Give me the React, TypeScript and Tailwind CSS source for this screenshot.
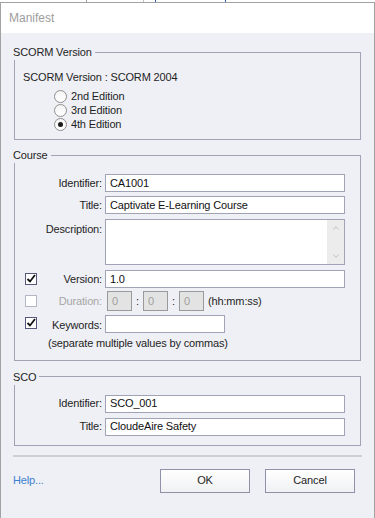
import { ChevronUp, ChevronDown } from 'lucide-react'

const font = { fontFamily: '"Liberation Sans", Arial, sans-serif' }

function Radio({ checked, label }: { checked?: boolean; label: string }) {
  return (
    <div className="flex items-center h-[14px]">
      <span className="w-[13px] h-[13px] rounded-full border border-[#8f8f8f] bg-gradient-to-b from-[#f4f4f4] to-white flex items-center justify-center">
        {checked && <span className="w-[5px] h-[5px] rounded-full bg-[#1a1a1a]" />}
      </span>
      <span className="ml-[4px] text-[#1e1e1e]">{label}</span>
    </div>
  )
}

function Check({ checked, disabled }: { checked?: boolean; disabled?: boolean }) {
  return (
    <span className={`w-[12px] h-[12px] border flex items-center justify-center bg-white ${disabled ? 'border-[#b4b6c4]' : 'border-[#55587a]'}`}>
      {checked && (
        <svg width="10" height="10" viewBox="0 0 10 10">
          <path d="M1.5 5 L4 7.5 L9 1" fill="none" stroke="#111" strokeWidth="1.8" />
        </svg>
      )}
    </span>
  )
}

function Field({ label, value, w = 'w-[240px]' }: { label: string; value?: string; w?: string }) {
  return (
    <div className="flex items-center">
      <span className="w-[87px] text-right text-[#1e1e1e]">{label}</span>
      <div className={`ml-[3px] ${w} h-[18px] border border-[#a0a3b6] bg-white flex items-center pl-[4px] text-[#111]`}>
        {value}
      </div>
    </div>
  )
}

function Group({ title, children, className }: { title: string; children: React.ReactNode; className?: string }) {
  return (
    <fieldset className={`border border-[#a0a3b6] mx-[13px] ${className ?? ''}`}>
      <legend className="-ml-[2px] pr-[3px] bg-[#eff0f5] leading-[16px] text-[#1e1e1e]">{title}</legend>
      {children}
    </fieldset>
  )
}

function TimeBox() {
  return (
    <div className="w-[25px] h-[20px] border border-[#9a9a9a] bg-[#e3e3e3] flex items-center pl-[4px] text-[#9e9e9e]">0</div>
  )
}

export default function App() {
  return (
    <div className="w-[375px] h-[518px] overflow-hidden bg-white text-[11px] tracking-[-0.15px]" style={font}>
      {/* bit of the app behind */}
      <div className="h-[2px] flex bg-white">
        <div className="w-[86px]" />
        <div className="w-px bg-[#9a9a9a]" />
        <div className="w-[56px]" />
        <div className="w-px bg-[#c0c0c0]" />
        <div className="w-[11px]" />
        <div className="w-px bg-[#2b5fb0]" />
        <div className="w-[69px]" />
        <div className="w-px bg-[#2b5fb0]" />
      </div>

      <div className="h-[516px] border-l border-t border-r border-[#a2a2a2] bg-[#eff0f5] flex flex-col">
        <div className="h-[30px] bg-white flex items-center pl-[8px] text-[12px] tracking-normal text-[#9d9d9d]">Manifest</div>

        <Group title="SCORM Version" className="mt-[11px] pb-[8px]">
          <div className="mt-[9px] pl-[8px] leading-[16px] text-[#1e1e1e]">SCORM Version : SCORM 2004</div>
          <div className="mt-[4px] pl-[39px] flex flex-col">
            <Radio label="2nd Edition" />
            <Radio label="3rd Edition" />
            <Radio checked label="4th Edition" />
          </div>
        </Group>

        <Group title="Course" className="mt-[7px] pb-[9px]">
          <div className="mt-[11px] flex flex-col">
            <Field label="Identifier:" value="CA1001" />
            <div className="mt-[4px]">
              <Field label="Title:" value="Captivate E-Learning Course" />
            </div>
            <div className="mt-[5px] flex items-start">
              <span className="w-[87px] text-right text-[#1e1e1e] mt-[2px]">Description:</span>
              <div className="ml-[3px] w-[240px] h-[46px] border border-[#a0a3b6] bg-white flex justify-end">
                <div className="w-[17px] h-full bg-[#ececec] flex flex-col items-center justify-between py-[3px] text-[#b5b5b5]">
                  <ChevronUp size={10} strokeWidth={2} />
                  <ChevronDown size={10} strokeWidth={2} />
                </div>
              </div>
            </div>

            <div className="mt-[5px] flex items-center">
              <span className="w-[87px] flex items-center">
                <span className="ml-[10px]"><Check checked /></span>
                <span className="ml-auto text-[#1e1e1e]">Version:</span>
              </span>
              <div className="ml-[3px] w-[240px] h-[18px] border border-[#a0a3b6] bg-white flex items-center pl-[4px] text-[#111]">1.0</div>
            </div>

            <div className="mt-[3px] flex items-center">
              <span className="w-[87px] flex items-center">
                <span className="ml-[10px]"><Check disabled /></span>
                <span className="ml-auto text-[#a6a6a6]">Duration:</span>
              </span>
              <div className="ml-[5px] flex items-center">
                <TimeBox />
                <span className="w-[11px] text-center text-[#1e1e1e]">:</span>
                <TimeBox />
                <span className="w-[11px] text-center text-[#1e1e1e]">:</span>
                <TimeBox />
                <span className="ml-[4px] text-[#1e1e1e]">(hh:mm:ss)</span>
              </div>
            </div>

            <div className="mt-[4px] flex items-start">
              <span className="w-[87px] flex items-start">
                <span className="ml-[10px] mt-[2px]"><Check checked /></span>
                <span className="ml-auto mt-[2px] text-[#1e1e1e]">Keywords:</span>
              </span>
              <div className="ml-[3px] w-[120px] h-[18px] border border-[#a0a3b6] bg-white" />
            </div>
            <div className="pl-[33px] mt-[1px] leading-[16px] text-[#1e1e1e]">(separate multiple values by commas)</div>
          </div>
        </Group>

        <Group title="SCO" className="mt-[8px] pb-[9px]">
          <div className="mt-[10px] flex flex-col">
            <Field label="Identifier:" value="SCO_001" />
            <div className="mt-[5px]">
              <Field label="Title:" value="CloudeAire Safety" />
            </div>
          </div>
        </Group>

        <div className="mx-[12px] mt-[9px] h-[2px] bg-[#cfd0d6]" />

        <div className="mt-[12px] mx-[12px] flex items-center">
          <span className="text-[#3a80d2] text-[11px]">Help...</span>
          <div className="ml-auto flex gap-[15px] mr-[7px]">
            <button className="w-[90px] h-[24px] border border-[#8e91a8] bg-gradient-to-b from-white to-[#f0f1f4] text-[#1e1e1e]">OK</button>
            <button className="w-[90px] h-[24px] border border-[#8e91a8] bg-gradient-to-b from-white to-[#f0f1f4] text-[#1e1e1e]">Cancel</button>
          </div>
        </div>
      </div>
    </div>
  )
}
